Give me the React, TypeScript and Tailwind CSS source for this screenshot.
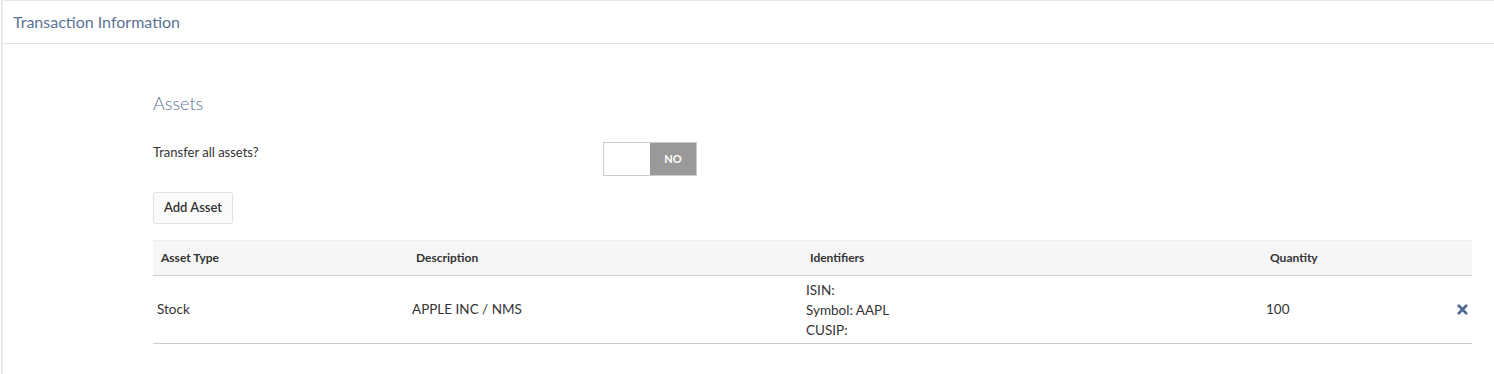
const assets = [
  { type: 'Stock', description: 'APPLE INC / NMS', isin: '', symbol: 'AAPL', cusip: '', quantity: 100 },
];

function RemoveIcon() {
  return (
    <svg viewBox="0 0 12 12" className="ml-auto h-[11px] w-[11px] text-[#4d6a91]">
      <path d="M2 2 L10 10 M10 2 L2 10" stroke="currentColor" strokeWidth="3" strokeLinecap="round" />
    </svg>
  );
}

export default function App() {
  return (
    <div className="min-h-[374px] bg-white font-['Lato','Liberation_Sans',sans-serif] text-[#333]">
      <div className="ml-[1px] min-h-[374px] border-l-2 border-t border-[#e8e8e8]">
        {/* panel header */}
        <div className="flex h-[43px] items-center border-b border-[#e3e3e3] px-[10px]">
          <h2 className="text-[16px] text-[#5b7396]">Transaction Information</h2>
        </div>

        <div className="pl-[150px] pr-[22px] pt-[49px]">
          <h3 className="text-[18px] font-light leading-5 text-[#5b7396]">Assets</h3>

          <div className="mt-[29px] flex items-start">
            <label className="w-[450px] text-[13px] leading-5 text-[#333]">Transfer all assets?</label>
            <div className="flex h-[34px] w-[94px] border border-[#ccc]">
              <div className="w-[46px] bg-white" />
              <div className="flex flex-1 items-center justify-center bg-[#999] text-[11px] font-bold text-white">NO</div>
            </div>
          </div>

          <button className="mt-[16px] h-[32px] rounded-[3px] border border-[#e3e3e3] bg-[#fafafa] px-[10px] text-[13px] font-semibold text-[#333]">
            Add Asset
          </button>

          <table className="mt-[16px] w-full border-collapse text-left">
            <thead>
              <tr className="h-[35px] border-t border-b border-t-[#eee] border-b-[#ccc] bg-[#f6f6f6] text-[12px] font-bold text-[#333]">
                <th className="w-[255px] px-[8px]">Asset Type</th>
                <th className="w-[394px] px-[8px]">Description</th>
                <th className="w-[460px] px-[8px]">Identifiers</th>
                <th className="w-[178px] px-[8px]">Quantity</th>
                <th />
              </tr>
            </thead>
            <tbody>
              {assets.map((a) => (
                <tr key={a.symbol} className="h-[68px] border-b border-[#ccc] text-[13.5px]">
                  <td className="px-[4px]">{a.type}</td>
                  <td className="px-[4px]">{a.description}</td>
                  <td className="px-[4px] leading-[20px]">
                    <div>ISIN: {a.isin}</div>
                    <div>Symbol: {a.symbol}</div>
                    <div>CUSIP: {a.cusip}</div>
                  </td>
                  <td className="px-[4px]">{a.quantity}</td>
                  <td className="pr-[4px] text-right">
                    <RemoveIcon />
                  </td>
                </tr>
              ))}
            </tbody>
          </table>
        </div>
      </div>
    </div>
  );
}
